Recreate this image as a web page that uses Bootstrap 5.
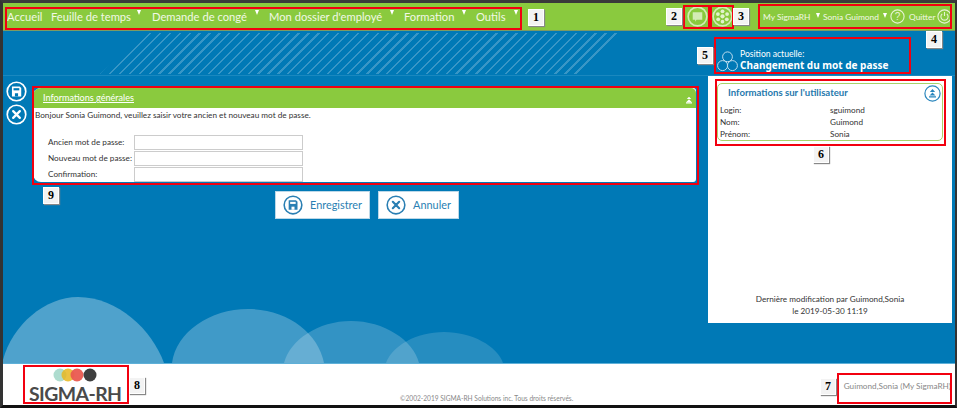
<!DOCTYPE html>
<html lang="fr">
<head>
<meta charset="utf-8">
<title>SigmaRH</title>
<link href="https://cdn.jsdelivr.net/npm/bootstrap@5.3.0/dist/css/bootstrap.min.css" rel="stylesheet">
<style>
html,body{margin:0;padding:0;background:#222;overflow:hidden}
body{font-family:"Lato","Noto Sans",sans-serif;font-size:8.2px;color:#333;line-height:12px}
.shot{position:relative;width:957px;height:408px;border-style:solid;border-color:#3a3a3a #333 #111 #333;border-width:3px 2px 3px 3px;display:flex;flex-direction:column;background:#fff;overflow:hidden}
.topbar{height:28px;background:#8aca3e;flex:none;display:flex;align-items:center;color:#f2f8e6;font-size:11.2px;border-bottom:1px solid #7d9a63}
.menu-item{color:#f2f8e6;text-decoration:none;display:flex;align-items:flex-start;white-space:nowrap;line-height:14px}
.menu-arrow{width:0;height:0;border-left:2.5px solid transparent;border-right:2.5px solid transparent;border-top:5px solid #fff;display:inline-block;margin-top:0}
.mainmenu{padding-left:4px;width:519px;flex:none;display:flex;gap:10px}
.m1{width:33px;margin-right:1px}.m2{width:90px;justify-content:space-between;margin-right:1px}.m3{width:107px;justify-content:space-between}
.m4{width:125px;justify-content:space-between}.m5{width:62px;justify-content:space-between}.m6{width:42px;justify-content:space-between}
.roundicons{margin-left:165px;display:flex;gap:4px;align-items:center;flex:none}
.usermenu{margin-left:30px;display:flex;align-items:center;font-size:8.4px;flex:none}
.u1{width:57px;justify-content:space-between;margin-right:3px}.u2{width:64px;justify-content:space-between;margin-right:3px}
.u3{margin-left:4px;width:25px;margin-right:3px}
.usermenu .menu-arrow{margin-top:3px}
.stage{flex:1;background:#0079b6;position:relative;border-bottom:1px solid #5eb0d8;overflow:hidden;display:flex;flex-direction:column}
.hills{position:absolute;left:0;bottom:0;display:block}
.hatch{position:absolute;left:97px;top:2px;width:523px;height:41px;clip-path:polygon(45px 0,100% 0,477px 100%,0 100%);background:repeating-linear-gradient(135deg,rgba(255,255,255,.22) 0 1.6px,transparent 1.6px 7px)}
.posrow{height:45px;flex:none;border-bottom:1px solid #1a88bf;display:flex;position:relative;padding:20px 0 0 714px;color:#fff}
.postext{margin:-2px 0 0 2px;font-size:8.6px;line-height:11px;white-space:nowrap}
.postext b{display:block;font-family:"Noto Sans",sans-serif;font-size:10px;line-height:11px;font-weight:700}
.workrow{display:flex;position:relative;flex:1;align-items:flex-start}
.sidebtns{margin:5px 0 0 3px;width:21px;display:flex;flex-direction:column;gap:2px}
.workcol{margin:12px 0 0 6px;width:663px;display:flex;flex-direction:column}
.infocard{height:94px;border:0;border-radius:8px 3px 3px 8px;overflow:hidden;background:#fff}
.infohead{height:20px;background:#8aca3e;padding:4px 4px 0 10px;display:flex;justify-content:space-between;border:0;border-radius:0}
.infohead a{color:#fff;font-size:9.1px;text-decoration:underline}
.infobody{padding:0 0 0 2px;color:#333}
.greet{margin:1px 0 14px}
.pwgrid{display:grid;grid-template-columns:86px 169px;row-gap:1.5px;padding-left:13px;align-items:center}
.pwgrid label{white-space:nowrap}
.pwinput{height:14.5px;min-height:0;padding:0;border:1px solid #ccc;border-radius:0;width:169px}
.centerbtns{margin:9px 0 0 242px;display:flex;gap:8px}
.actbtn{height:28px;padding:0 7px 0 7px;background:#fff;border:1px solid #bcd8e8;border-radius:0;color:#2a7fb3;display:flex;align-items:center;gap:7px;font-size:10.9px}
.panel{margin-left:12px;width:244px;height:247px;flex:none;background:#fff;padding:7px 9px 0 9px;display:flex;flex-direction:column;justify-content:space-between}
.usercard{height:58px;border:1px solid #a8d26a;border-radius:5px;padding:1px 1px 0 2px}
.usertitle{color:#1f79ad;font-weight:700;font-size:9.6px;padding:2px 0 0 8px;height:19px;display:flex;justify-content:space-between}
.usericon{margin-top:-2px}
.kv{display:grid;grid-template-columns:110px 1fr;line-height:12px}
.lastmod{text-align:center;margin-bottom:6px}
.foot{height:41px;flex:none;background:#fff;position:relative;display:flex;justify-content:space-between}
.logoarea{padding:4px 0 0 26px;width:140px}
.logomark{display:block;margin:0 0 3px 24px}
.logoword{font-weight:700;font-size:19.4px;line-height:17px;color:#4a4a4a;letter-spacing:-.55px;white-space:nowrap}
.copy{position:absolute;left:397px;bottom:2px;font-size:6.6px;color:#888;line-height:9px;white-space:nowrap}
.whoami{padding:16px 4px 0 0;color:#888;white-space:nowrap}
.ann{position:absolute;border:2px solid #f2000f;pointer-events:none}
.tag{position:absolute;width:16px;height:17px;background:#f3f3f3;border:1px solid #fff;box-shadow:1px 1px 1px #888;color:#000;font-weight:700;font-family:"Liberation Serif",serif;font-size:12px;line-height:15px;text-align:center}
.a1{left:2px;top:4px;width:517px;height:23px}.a2{left:680px;top:2px;width:27px;height:24px}.a3{left:707px;top:2px;width:24px;height:24px}
.a4{left:755px;top:1px;width:194px;height:25px}.a5{left:711px;top:34px;width:197px;height:37px}.a6{left:712px;top:76px;width:231px;height:67px}
.a7{left:834px;top:370px;width:115px;height:31px}.a8{left:20px;top:362px;width:106px;height:39px}.a9{left:29px;top:83px;width:667px;height:99px}
.t1{left:525px;top:6px}.t2{left:663px;top:5px}.t3{left:730px;top:5px}.t4{left:923px;top:28px}.t5{left:694px;top:44px}.t6{left:810px;top:143px}.t7{left:817px;top:375px}.t8{left:126px;top:374px}.t9{left:40px;top:184px}
</style>
</head>
<body>
<svg width="0" height="0" style="position:absolute">
<defs>
<symbol id="ico-save" viewBox="0 0 24 24"><circle cx="12" cy="12" r="10.600" fill="none" stroke="currentColor" stroke-width="1.900"/><path d="M6.800 6.300h8.800l1.800 1.800v9.600H6.800z" fill="currentColor"/><rect x="8.600" y="8.200" width="6.600" height="2.500" fill="var(--hole)"/><rect x="10.200" y="14" width="3.600" height="3.700" fill="var(--hole)"/></symbol>
<symbol id="ico-x" viewBox="0 0 24 24"><circle cx="12" cy="12" r="10.600" fill="none" stroke="currentColor" stroke-width="1.900"/><path d="M8.200 8.200l7.600 7.600M15.800 8.200l-7.600 7.600" stroke="currentColor" stroke-width="2.600" stroke-linecap="round"/></symbol>
</defs>
</svg>
<div class="shot">
  <div class="topbar">
    <nav class="mainmenu">
      <a class="menu-item m1" href="#">Accueil</a>
      <a class="menu-item m2" href="#">Feuille de temps<i class="menu-arrow"></i></a>
      <a class="menu-item m3" href="#">Demande de congé<i class="menu-arrow"></i></a>
      <a class="menu-item m4" href="#">Mon dossier d'employé<i class="menu-arrow"></i></a>
      <a class="menu-item m5" href="#">Formation<i class="menu-arrow"></i></a>
      <a class="menu-item m6" href="#">Outils<i class="menu-arrow"></i></a>
    </nav>
    <div class="roundicons">
      <svg width="21" height="21" viewBox="0 0 22 22"><circle cx="11" cy="11" r="9.800" fill="none" stroke="#d4ecb4" stroke-width="1.700"/><path d="M6 6.500h10v8h-6l-1.500 2v-2H6z" fill="#d4ecb4"/></svg>
      <svg width="21" height="21" viewBox="0 0 22 22"><circle cx="11" cy="11" r="9.800" fill="none" stroke="#d4ecb4" stroke-width="1.700"/><g fill="#e2f2cc"><circle cx="11" cy="5.600" r="2"/><circle cx="6.200" cy="8.500" r="2"/><circle cx="15.800" cy="8.500" r="2"/><circle cx="6.500" cy="14" r="2"/><circle cx="15.500" cy="14" r="2"/><circle cx="11" cy="16.400" r="1.900"/><circle cx="11" cy="10.800" r="2.200"/></g></svg>
    </div>
    <div class="usermenu">
      <a class="menu-item u1" href="#">My SigmaRH<i class="menu-arrow"></i></a>
      <a class="menu-item u2" href="#">Sonia Guimond<i class="menu-arrow"></i></a>
      <svg width="15" height="15" viewBox="0 0 15 15"><circle cx="7.500" cy="7.500" r="6.600" fill="none" stroke="#e6f3d4" stroke-width="1.100"/><text x="7.500" y="11" text-anchor="middle" font-size="10" fill="#e6f3d4" font-family="Liberation Sans">?</text></svg>
      <a class="menu-item u3" href="#">Quitter</a>
      <svg width="15" height="15" viewBox="0 0 15 15"><circle cx="7.500" cy="7.500" r="6.600" fill="none" stroke="#e6f3d4" stroke-width="1.100"/><path d="M5.200 4.800a3.600 3.600 0 1 0 4.600 0M7.500 3v4" fill="none" stroke="#e6f3d4" stroke-width="1.100"/></svg>
    </div>
  </div>

  <div class="stage">
    <svg class="hills" width="520" height="70" viewBox="3 293 520 70">
      <g fill="#fff">
        <path d="M3 360C12 325 45 297 78 297C118 297 152 330 164 363H3z" opacity=".31"/>
        <path d="M172 363C176 332 210 309 248 309C286 309 318 332 324 363z" opacity=".25"/>
        <path d="M284 363C290 340 318 321 351 321C384 321 413 340 419 363z" opacity=".2"/>
        <path d="M386 363C392 346 416 332 444 332C472 332 497 346 503 363z" opacity=".15"/>
      </g>
    </svg>
    <div class="posrow">
      <div class="hatch"></div>
      <svg width="21" height="21" viewBox="0 0 21 21"><g fill="none" stroke="#bcdcee" stroke-width="1"><circle cx="10.500" cy="5.800" r="4.900"/><circle cx="5.600" cy="14.600" r="5"/><circle cx="15.400" cy="14.600" r="5"/></g></svg>
      <div class="postext">Position actuelle:<b>Changement du mot de passe</b></div>
    </div>
    <div class="workrow">
      <div class="sidebtns" style="--hole:#0079b6">
        <svg class="text-white" width="21" height="21"><use href="#ico-save"/></svg>
        <svg class="text-white" width="21" height="21"><use href="#ico-x"/></svg>
      </div>
      <div class="workcol">
        <div class="card infocard">
          <div class="card-header infohead"><a href="#">Informations générales</a>
            <svg width="6" height="8" viewBox="0 0 8 9" class="mt-1"><path d="M4 0l3 3H1zM4 3.500l3.500 3.500H.5zM0 7.500h8V9H0z" fill="#fff"/></svg>
          </div>
          <div class="card-body infobody">
            <p class="greet">Bonjour Sonia Guimond, veuillez saisir votre ancien et nouveau mot de passe.</p>
            <div class="pwgrid">
              <label for="p1">Ancien mot de passe:</label><input id="p1" class="form-control pwinput" type="text">
              <label for="p2">Nouveau mot de passe:</label><input id="p2" class="form-control pwinput" type="text">
              <label for="p3">Confirmation:</label><input id="p3" class="form-control pwinput" type="text">
            </div>
          </div>
        </div>
        <div class="centerbtns" style="--hole:#fff">
          <button type="button" class="btn actbtn"><svg width="20" height="20"><use href="#ico-save"/></svg>Enregistrer</button>
          <button type="button" class="btn actbtn"><svg width="20" height="20"><use href="#ico-x"/></svg>Annuler</button>
        </div>
      </div>
      <div class="panel">
        <div class="usercard">
          <div class="usertitle"><span>Informations sur l'utilisateur</span>
            <svg width="17" height="17" viewBox="0 0 17 17" class="usericon"><circle cx="8.500" cy="8.500" r="7.600" fill="none" stroke="#2a86bd" stroke-width="1.200"/><path d="M8.500 4l2.600 3H5.900zM8.500 7.600l3 3H5.500zM5 11.200h7v1.200H5z" fill="#2a86bd"/></svg>
          </div>
          <div class="kv"><span>Login:</span><span>sguimond</span><span>Nom:</span><span>Guimond</span><span>Prénom:</span><span>Sonia</span></div>
        </div>
        <div class="lastmod">Dernière modification par Guimond,Sonia<br>le 2019-05-30 11:19</div>
      </div>
    </div>
  </div>

  <div class="foot">
    <div class="logoarea">
      <svg class="logomark" width="44" height="14" viewBox="53 368 44 14"><circle cx="60" cy="375" r="6.500" fill="#aedccf"/><circle cx="68" cy="375" r="6.500" fill="#e8b71e" opacity=".85"/><circle cx="77" cy="375" r="6.500" fill="#ea5a50" opacity=".95"/><circle cx="90" cy="375" r="6.500" fill="#3f3f3f"/></svg>
      <div class="logoword">SIGMA-RH</div>
    </div>
    <div class="copy">©2002-2019 SIGMA-RH Solutions inc. Tous droits réservés.</div>
    <div class="whoami">Guimond,Sonia (My SigmaRH)</div>
  </div>

  <div class="ann a1"></div><div class="ann a2"></div><div class="ann a3"></div><div class="ann a4"></div><div class="ann a5"></div><div class="ann a6"></div><div class="ann a7"></div><div class="ann a8"></div><div class="ann a9"></div>
  <div class="tag t1">1</div><div class="tag t2">2</div><div class="tag t3">3</div><div class="tag t4">4</div><div class="tag t5">5</div><div class="tag t6">6</div><div class="tag t7">7</div><div class="tag t8">8</div><div class="tag t9">9</div>
</div>
<script src="https://cdn.jsdelivr.net/npm/bootstrap@5.3.0/dist/js/bootstrap.bundle.min.js"></script>
</body>
</html>
